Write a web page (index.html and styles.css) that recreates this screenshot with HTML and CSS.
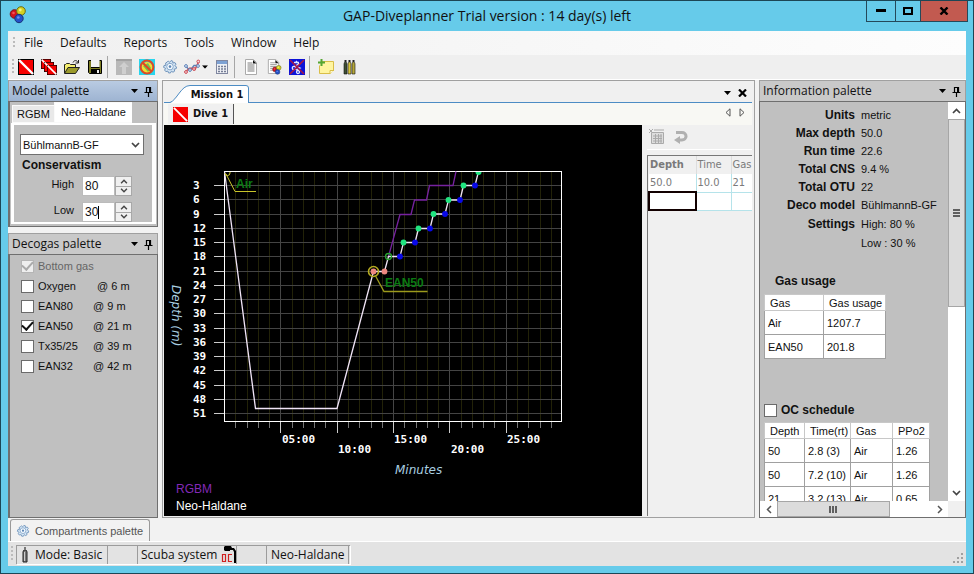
FILE: index.html
```html
<!DOCTYPE html>
<html lang="en">
<head>
<meta charset="utf-8">
<title>GAP-Diveplanner</title>
<link rel="stylesheet" href="styles.css">
</head>
<body>
<svg class="defs" width="0" height="0" aria-hidden="true">
  <defs>
    <symbol id="flag" viewBox="0 0 16 16"><rect width="16" height="16" fill="#000"/><rect x="1" y="1" width="14" height="14" fill="#f60000"/><path d="M1 1l14 14" stroke="#fff" stroke-width="2.4"/></symbol>
    <symbol id="pin" viewBox="0 0 9 11"><path d="M2.5 6V1.5H6.5V6M5.6 1v5M0.5 6.5h8M4.5 7v4" fill="none" stroke="#000" stroke-width="1.2"/></symbol>
    <symbol id="down" viewBox="0 0 7 4"><path d="M0 0h7L3.5 4z" fill="#000"/></symbol>
    <symbol id="chev-up" viewBox="0 0 9 6"><path d="M1 5l3.5-3.5L8 5" fill="none" stroke="#444" stroke-width="1.7"/></symbol>
    <symbol id="chev-down" viewBox="0 0 9 6"><path d="M1 1l3.5 3.5L8 1" fill="none" stroke="#444" stroke-width="1.7"/></symbol>
    <symbol id="gear" viewBox="0 0 16 16"><path d="M6.2 2l1.4 1.3L9 1.6l1.7.5.2 1.9 2.1-.4 1 1.6-1.2 1.5 1.7 1.2-.3 1.8-2 .4.4 2.1-1.6 1-1.6-1-1 1.8-1.9-.1-.6-1.8-2.1.5L2.6 11l1-1.6-2-1L2 6.5l2-.3L3.6 4l1.6-.9z" fill="#d5e6f5" stroke="#6f93bb" stroke-width="1"/><circle cx="8" cy="7.6" r="3.3" fill="#f4faff" stroke="#86a7ca"/><circle cx="8" cy="7.6" r="1.3" fill="#5d86b5"/></symbol>
    <symbol id="balls" viewBox="0 0 18 18"><circle cx="5.5" cy="8" r="4.3" fill="#d3141c" stroke="#74151a"/><circle cx="12" cy="5" r="4.3" fill="#d4d021" stroke="#6d6d16"/><circle cx="10" cy="12.5" r="4.2" fill="#2552c8" stroke="#173276"/><circle cx="11.3" cy="4" r="1.4" fill="#f6f47d"/><circle cx="4.5" cy="7" r="1.3" fill="#f0555a"/><circle cx="9.3" cy="11.5" r="1.3" fill="#6d8df0"/></symbol>
    <symbol id="page" viewBox="0 0 16 16"><path d="M2.5.5h8l3 3v12h-11z" fill="#fff" stroke="#aaa"/><path d="M10 1l3.5 3.5H10z" fill="#111"/><path d="M4.5 4h5M4.5 6h7M4.5 8h7M4.5 10h7M4.5 12h7" stroke="#a8a8a8" stroke-width="1.3"/></symbol>
  </defs>
</svg>

<div class="window">
  <header class="titlebar">
    <svg class="app-icon" viewBox="0 0 18 18"><use href="#balls"/></svg>
    <h1>GAP-Diveplanner Trial version : 14 day(s) left</h1>
    <div class="caption">
      <button class="min" aria-label="Minimize"><svg width="10" height="4"><rect width="10" height="3"/></svg></button>
      <button class="max" aria-label="Maximize"><svg width="10" height="8"><rect x="1" y="1" width="8" height="6" fill="none" stroke="#000" stroke-width="2"/></svg></button>
      <button class="close" aria-label="Close"><svg width="10" height="8"><path d="M1.5.5l7 7M8.5.5l-7 7" stroke="#000" stroke-width="2.4"/></svg></button>
    </div>
  </header>

  <div class="client">
    <nav class="menubar">
      <i class="grip"></i>
      <button>File</button><button>Defaults</button><button>Reports</button><button>Tools</button><button>Window</button><button>Help</button>
    </nav>

    <div class="toolbar" role="toolbar" aria-label="Main">
      <i class="grip"></i>
      <button aria-label="New dive"><svg class="ic"><use href="#flag"/></svg></button>
      <button aria-label="New mission"><svg class="ic" viewBox="0 0 16 16"><use href="#flag" width="10" height="10"/><use href="#flag" x="3" y="3" width="10" height="10"/><use href="#flag" x="6" y="6" width="10" height="10"/></svg></button>
      <button aria-label="Open"><svg class="ic" viewBox="0 0 16 16"><path d="M.5 14V5.5h1l1-1h3l1 1h5V8" fill="#f5ef70" stroke="#222"/><path d="M.5 14.5L4 8.5h11.5l-4 6z" fill="#9b9a2b" stroke="#222"/><path d="M9 3.5c1-2.5 4-2.5 5 0M14.5 1v3h-3" fill="none" stroke="#222"/></svg></button>
      <button aria-label="Save"><svg class="ic" viewBox="0 0 16 16"><path d="M1.5 1.5h13v13H2.5l-1-1z" fill="#7d7d23" stroke="#000"/><path d="M4 1h8.5v7H4z" fill="#f2f2f2"/><path d="M4 8.5h8.5" stroke="#000"/><path d="M4 10h9v4.5H4z" fill="#000"/><path d="M10 11h2v3h-2z" fill="#eee"/></svg></button>
      <i class="sep"></i>
      <button aria-label="Ascent"><svg class="ic" viewBox="0 0 16 16"><rect width="16" height="16" fill="#b9b9b9"/><path d="M0 1h16" stroke="#a2a2a2" stroke-width="2"/><path d="M8 3l5 5h-3v7H6V8H3z" fill="#cfcfcf"/></svg></button>
      <button aria-label="No-fly"><svg class="ic" viewBox="0 0 16 16"><rect width="16" height="16" fill="#27d5ee"/><circle cx="8" cy="8.5" r="5.5" fill="#f6df31"/><path d="M4 7l5-3 3 5-3 4z" fill="#6dc455"/><circle cx="8" cy="8" r="6.4" fill="none" stroke="#dd4a26" stroke-width="2"/><path d="M3.5 3.5l9 9" stroke="#dd4a26" stroke-width="2.2"/></svg></button>
      <button aria-label="Settings"><svg class="ic"><use href="#gear"/></svg></button>
      <button class="split" aria-label="Graphs"><svg class="ic" viewBox="0 0 16 16"><path d="M1 6.5l5 5 4-5h5" fill="none" stroke="#5b7fb5" stroke-width="1.3"/><path d="M1 13l5-4 5 1.5L15 2" fill="none" stroke="#cc4954" stroke-width="1.5"/><g fill="#e9f1fb" stroke="#5b7fb5"><circle cx="2" cy="7" r="1.4"/><circle cx="6" cy="11" r="1.4"/><circle cx="14" cy="7" r="1.4"/></g><g fill="#f7dfe1" stroke="#cc4954"><circle cx="2" cy="13" r="1.4"/><circle cx="10" cy="10" r="1.4"/><circle cx="14.3" cy="2.5" r="1.4"/></g></svg><svg width="6" height="4" viewBox="0 0 7 4"><use href="#down"/></svg></button>
      <button aria-label="Calculator"><svg class="ic" viewBox="0 0 16 16"><rect x="2.5" y="1.5" width="11" height="13" fill="#eef0f5" stroke="#8087a0"/><path d="M3 2h10v3H3z" fill="#7da2d4"/><path d="M4 7.5h8M4 10h8M4 12.5h8" stroke="#767d95" stroke-width="1.5" stroke-dasharray="2 1"/></svg></button>
      <i class="sep"></i>
      <button aria-label="Report"><svg class="ic"><use href="#page"/></svg></button>
      <button aria-label="Gas report"><svg class="ic" viewBox="0 0 16 16"><use href="#page" width="15" height="15"/><use href="#balls" x="6" y="6" width="10" height="10"/></svg></button>
      <button aria-label="Exclude bubbles"><svg class="ic" viewBox="0 0 16 16"><rect width="16" height="16" fill="#0a12d8"/><g fill="none" stroke="#dfe8ff" stroke-width="1.3"><path d="M5 3.5h5M7 2l3 3-4 2 5 2-4 2"/><circle cx="5" cy="9" r="1.7"/><circle cx="9" cy="13" r="1.5"/></g><path d="M1 1l14 14M15 1L1 15" stroke="#a71845" stroke-width="1.6"/></svg></button>
      <i class="sep"></i>
      <button aria-label="Add note"><svg class="ic" viewBox="0 0 16 16"><path d="M3.5 2.5h12v9l-3 3h-11v-8" fill="#fff5a0" stroke="#d9be48"/><path d="M12 15v-3.5h4" fill="#fffad0" stroke="#d9be48"/><path d="M3.5 0v7M0 3.5h7" stroke="#55a632" stroke-width="2"/></svg></button>
      <button aria-label="Tanks"><svg class="ic" viewBox="0 0 16 16"><path d="M3 5q0-2 1.5-2T6 5v10H3z" fill="#3e4f35" stroke="#111" stroke-width=".6"/><path d="M7 5q0-2 1.5-2T10 5v10H7z" fill="#d8c53c" stroke="#111" stroke-width=".6"/><path d="M11 5q0-2 1.5-2T14 5v10h-3z" fill="#b5a73a" stroke="#111" stroke-width=".6"/><path d="M3.5 1h2v2h-2zM7.5 1h2v2h-2zM11.5 1h2v2h-2z" fill="#222"/></svg></button>
    </div>

    <div class="workspace">
      <aside class="left">
        <section class="panel model">
          <header class="active"><h2>Model palette</h2><button aria-label="Panel menu"><svg width="7" height="4"><use href="#down"/></svg></button><button aria-label="Pin"><svg width="9" height="11"><use href="#pin"/></svg></button></header>
          <div class="body">
            <div class="tabs"><button>RGBM</button><button class="on">Neo-Haldane</button></div>
            <form class="page">
              <div class="select"><select aria-label="Model"><option>BühlmannB-GF</option></select><svg width="9" height="6"><use href="#chev-down"/></svg></div>
              <h3>Conservatism</h3>
              <div class="num"><label for="high">High</label><input id="high" value="80"><span class="spin"><button type="button" aria-label="Increase high"><svg width="8" height="5"><use href="#chev-up"/></svg></button><button type="button" aria-label="Decrease high"><svg width="8" height="5"><use href="#chev-down"/></svg></button></span></div>
              <div class="num"><label for="low">Low</label><span class="edit"><input id="low" value="30"><i class="caret"></i></span><span class="spin"><button type="button" aria-label="Increase low"><svg width="8" height="5"><use href="#chev-up"/></svg></button><button type="button" aria-label="Decrease low"><svg width="8" height="5"><use href="#chev-down"/></svg></button></span></div>
            </form>
          </div>
        </section>
        <section class="panel deco">
          <header><h2>Decogas palette</h2><button aria-label="Panel menu"><svg width="7" height="4"><use href="#down"/></svg></button><button aria-label="Pin"><svg width="9" height="11"><use href="#pin"/></svg></button></header>
          <div class="body gases">
            <label class="off"><input type="checkbox" checked disabled><span>Bottom gas</span></label>
            <label><input type="checkbox"><span>Oxygen</span><b class="wide">@ 6 m</b></label>
            <label><input type="checkbox"><span>EAN80</span><b>@ 9 m</b></label>
            <label><input type="checkbox" checked><span>EAN50</span><b>@ 21 m</b></label>
            <label><input type="checkbox"><span>Tx35/25</span><b>@ 39 m</b></label>
            <label><input type="checkbox"><span>EAN32</span><b>@ 42 m</b></label>
          </div>
        </section>
      </aside>

      <main class="document">
        <div class="doc-tabs">
          <button class="doc-tab"><svg width="80" height="18" viewBox="0 0 80 18"><path d="M0 17.5H1C8 14 11 1.5 20 .5H76.5Q78.5.5 78.5 3V17.5V18H0z" fill="#fff"/><path d="M0 17.5C7 15 11 .5 20 .5H76Q78.5.5 78.5 3V18" fill="none" stroke="#4d8cc4"/></svg><span>Mission 1</span></button>
          <span class="doc-tools"><button aria-label="Documents"><svg width="7" height="4"><use href="#down"/></svg></button><button aria-label="Close document"><svg width="9" height="8"><path d="M1 .5l7 7M8 .5l-7 7" stroke="#000" stroke-width="2.2"/></svg></button></span>
        </div>
        <div class="dive-tabs">
          <button class="dive-tab"><svg width="15" height="15" viewBox="0 0 16 16"><rect width="16" height="16" fill="#f60000"/><path d="M1 1l14 14" stroke="#fff" stroke-width="2"/></svg><span>Dive 1</span></button>
          <span class="doc-tools"><button aria-label="Previous"><svg width="6" height="9"><path d="M5 .8v7.4L1 4.5z" fill="none" stroke="#555"/></svg></button><button aria-label="Next"><svg width="6" height="9"><path d="M1 .8v7.4l4-3.7z" fill="none" stroke="#555"/></svg></button></span>
        </div>
        <div class="dive">
          <div class="chart" id="chart"></div>
          <div class="segments">
            <div class="seg-tools">
              <button aria-label="Delete row"><svg width="16" height="16"><path d="M2.5 3.5h12v11h-12z" fill="#ddd" stroke="#aaa"/><path d="M4 7h9M4 9.5h9M4 12h9M6.5 5v9M9.5 5v9M12 5v9" stroke="#aaa"/><path d="M0 0l4 4M4 0L0 4M5 1h10" stroke="#aaa"/></svg></button>
              <button aria-label="Undo"><svg width="16" height="16"><path d="M3 3.5h6a4 3.7 0 0 1 0 7.5H6" fill="none" stroke="#b0b0b0" stroke-width="3"/><path d="M7 7v8L1 11z" fill="#b0b0b0"/></svg></button>
            </div>
            <div class="seg-grid">
              <table>
                <thead><tr><th class="first">Depth</th><th>Time</th><th>Gas</th></tr></thead>
                <tbody><tr><td>50.0</td><td>10.0</td><td>21</td></tr><tr><td class="cursor"></td><td></td><td></td></tr></tbody>
              </table>
            </div>
          </div>
        </div>
      </main>

      <aside class="panel info">
        <header><h2>Information palette</h2><button aria-label="Panel menu"><svg width="7" height="4"><use href="#down"/></svg></button><button aria-label="Pin"><svg width="9" height="11"><use href="#pin"/></svg></button></header>
        <div class="scroller">
          <div class="content">
            <dl>
              <dt>Units</dt><dd>metric</dd>
              <dt>Max depth</dt><dd>50.0</dd>
              <dt>Run time</dt><dd>22.6</dd>
              <dt>Total CNS</dt><dd>9.4 %</dd>
              <dt>Total OTU</dt><dd>22</dd>
              <dt>Deco model</dt><dd>BühlmannB-GF</dd>
              <dt>Settings</dt><dd>High: 80 %</dd>
              <dd>Low : 30 %</dd>
            </dl>
            <h3>Gas usage</h3>
            <table class="grid usage">
              <thead><tr><th>Gas</th><th>Gas usage</th></tr></thead>
              <tbody><tr><td>Air</td><td>1207.7</td></tr><tr><td>EAN50</td><td>201.8</td></tr></tbody>
            </table>
            <label class="oc"><input type="checkbox"><span>OC schedule</span></label>
            <table class="grid schedule">
              <colgroup><col class="c1"><col class="c2"><col class="c3"><col class="c4"></colgroup>
              <thead><tr><th>Depth</th><th>Time(rt)</th><th>Gas</th><th>PPo2</th></tr></thead>
              <tbody><tr><td>50</td><td>2.8 (3)</td><td>Air</td><td>1.26</td></tr><tr><td>50</td><td>7.2 (10)</td><td>Air</td><td>1.26</td></tr><tr><td>21</td><td>3.2 (13)</td><td>Air</td><td>0.65</td></tr></tbody>
            </table>
          </div>
          <div class="vbar"><button aria-label="Scroll up"><svg width="9" height="6"><use href="#chev-up"/></svg></button><div class="thumb"><svg width="7" height="8"><path d="M0 1h7M0 4h7M0 7h7" stroke="#606060" stroke-width="2"/></svg></div><button aria-label="Scroll down"><svg width="9" height="6"><use href="#chev-down"/></svg></button></div>
          <div class="hbar"><button aria-label="Scroll left"><svg width="6" height="9"><path d="M5 1L1.5 4.5 5 8" fill="none" stroke="#555" stroke-width="1.5"/></svg></button><div class="thumb"><svg width="8" height="7"><path d="M1 0v7M4 0v7M7 0v7" stroke="#606060" stroke-width="2"/></svg></div><button aria-label="Scroll right"><svg width="6" height="9"><path d="M1 1l3.5 3.5L1 8" fill="none" stroke="#555" stroke-width="1.5"/></svg></button></div>
        </div>
      </aside>
    </div>

    <div class="autohide"><button><svg width="14" height="14"><use href="#gear"/></svg><span>Compartments palette</span></button></div>

    <footer class="statusbar">
      <i class="grip"></i>
      <span class="cell mode"><svg width="8" height="16"><path d="M2 5q0-2 2-2t2 2v10H2z" fill="#777" stroke="#222"/><path d="M3 0h2v3H3z" fill="#777"/><path d="M3.5 5v9" stroke="#ccc"/></svg>Mode: Basic</span>
      <span class="cell blank"></span>
      <span class="cell scuba">Scuba system<svg width="15" height="17" viewBox="0 0 15 17"><path d="M3 1l1-1h6l1 2h2l2 3v12h-2V6l-1-2H9v1H4L3 4z" fill="#000"/><path d="M1.5 8.5h3v7h-3zM11 8.5H7.5v7H11" fill="none" stroke="#d02020" stroke-width="1.2"/></svg></span>
      <span class="cell blank"></span>
      <span class="cell algo">Neo-Haldane</span>
      <span class="cell end"></span>
      <svg class="resize" width="11" height="11"><path d="M8 1h2M8 5h2M4 5h2M8 9h2M4 9h2M0 9h2" stroke="#a0a0a0" stroke-width="2"/></svg>
    </footer>
  </div>
</div>
<script src="chart.js"></script>
</body>
</html>
```
FILE: styles.css
```css
* { box-sizing: border-box; }
body { margin: 0; font: 11px/14px "Liberation Sans", Arial, sans-serif; color: #111; }
h1, h2, h3, dl, dd { margin: 0; font-size: inherit; }
button { display: flex; align-items: center; justify-content: center; margin: 0; padding: 0; border: 0; background: none; color: inherit; font: inherit; }
svg { display: block; flex: none; }
.defs { position: absolute; }
table { border-collapse: collapse; table-layout: fixed; }
th, td { text-align: left; font-weight: normal; white-space: nowrap; overflow: hidden; }

.window { display: flex; flex-direction: column; height: 100vh; padding: 0 7px 7px; border: 1px solid #1c4655; background: #66cbea; }
.titlebar { display: grid; flex: none; grid-template-columns: 1fr auto 1fr; height: 30px; }
.app-icon { width: 18px; height: 18px; margin: 5px 0 0 1px; }
.titlebar h1 { font: 14px/29px "Open Sans", "Noto Sans", sans-serif; white-space: nowrap; }
.caption { display: flex; justify-self: end; height: 21px; margin-right: -2px; border: 1px solid #24495a; border-top: 0; }
.caption button { width: 28px; }
.caption .max { width: 26px; border: solid #24495a; border-width: 0 1px; }
.caption .close { width: 46px; background: #c25a50; }

.client { display: flex; flex: 1; flex-direction: column; min-height: 0; background: #f2f2f2; }
.grip { flex: none; width: 2px; height: 16px; background: repeating-linear-gradient(#bbb 0 2px, transparent 2px 4px); }
.menubar, .panel h2, .statusbar, .toolbar { font-family: "Open Sans", "Noto Sans", sans-serif; font-size: 12px; }
.menubar { display: flex; flex: none; align-items: center; height: 24px; padding-left: 5px; background: linear-gradient(90deg, #f0f0f0, #fdfdfd); }
.menubar button { padding: 0 9px 0 8px; }
.menubar button:first-of-type { padding: 0 9px; }
.menubar .grip { height: 12px; }
.toolbar { display: flex; flex: none; align-items: center; height: 25px; padding-left: 4px; background: #efefef; border-bottom: 1px solid #fff; }
.toolbar button { width: 23px; height: 22px; }
.toolbar .split { width: 29px; gap: 2px; }
.toolbar .sep { width: 1px; height: 22px; margin: 0 4px 0 1px; background: #a6a6a6; }
.ic { width: 16px; height: 16px; }

.workspace { display: grid; flex: 1; grid-template-columns: 150px minmax(0, 1fr) 207px; gap: 4px; min-height: 0; }
.left { display: flex; flex-direction: column; gap: 6px; min-height: 0; }
.panel { display: flex; flex-direction: column; min-height: 0; }
.panel > header { display: flex; flex: none; align-items: center; gap: 6px; height: 21px; padding: 0 4px 0 3px; border: 1px solid #a0a0a0; border-bottom: 0; background: #c9c9c9; }
.panel > header.active { background: linear-gradient(#b9cbe2, #9eb4d2); }
.panel h2 { flex: 1; font-weight: normal; line-height: 18px; }
.panel .body { border: 1px solid #6f6f6f; border-width: 1px 1px 1px 2px; background: #c0c0c0; }
.deco { flex: 1; }
.deco .body { flex: 1; }

.tabs { display: flex; align-items: flex-end; height: 21px; padding-left: 2px; }
.tabs button { height: 18px; padding: 0 4px; border: 1px solid #fafafa; border-right: 0; background: #e9e9e9; }
.tabs .on { height: 21px; padding: 0 6px 2px; background: #fff; }
.page { margin: 0 1px 2px; padding: 9px 8px 0 6px; border: solid #fff; border-width: 2px 4px 2px 3px; }
.select { position: relative; }
.select select { appearance: none; display: block; width: 100%; height: 21px; padding: 0 2px; border: 1px solid #707070; border-radius: 0; background: #fff; font: inherit; color: inherit; }
.select svg { position: absolute; right: 4px; top: 8px; }
.page h3, .info h3, .info dt, .oc { font-size: 12px; font-weight: bold; }
.page h3 { padding: 3px 2px 4px; }
.num { display: flex; height: 20px; margin-bottom: 6px; }
.page .num:last-child { margin-bottom: 0; }
.num label { width: 54px; margin-right: 8px; text-align: right; line-height: 17px; }
.num input { display: block; width: 33px; height: 20px; padding: 0 2px; border: 1px solid #bbb; background: #fff; font: 12px "Liberation Sans", sans-serif; color: #111; }
.edit { position: relative; }
.caret { position: absolute; left: 16px; top: 4px; width: 1px; height: 13px; background: #000; }
.spin { display: flex; flex-direction: column; width: 17px; border: 1px solid #a8a8a8; background: #a8a8a8; gap: 1px; }
.spin button { flex: 1; background: #f0f0f0; }

input[type="checkbox"] { appearance: none; display: grid; place-items: center; flex: none; width: 13px; height: 13px; margin: 0; border: 1px solid #6b6b6b; background: #fff; }
input[type="checkbox"]:checked::before { content: ""; width: 9px; height: 5px; margin-top: -3px; border: solid #111; border-width: 0 0 2px 2px; transform: rotate(-48deg); }
input[type="checkbox"]:disabled { border-color: #b5b5b5; background: #eee; }
input[type="checkbox"]:disabled::before { border-color: #aaa; }
.panel .gases { padding: 1px 0 0 11px; }
.gases label { display: flex; align-items: center; height: 20px; }
.gases span { width: 55px; margin-left: 4px; white-space: nowrap; }
.gases b { font-weight: normal; }
.gases .wide { margin-left: 4px; }
.gases .off { color: #666; }

.document { display: flex; flex-direction: column; min-width: 0; padding: 0 2px 1px 1px; border: 1px solid #a0a0a0; background: #f0f0f0; }
.doc-tabs, .dive-tabs { display: flex; flex: none; justify-content: space-between; }
.doc-tabs { height: 22px; align-items: flex-end; border-bottom: 1px solid #4d8cc4; }
.dive-tabs { height: 22px; background: #f8f8f4; }
.doc-tab, .dive-tab { font: bold 11px/14px "DejaVu Sans Condensed", "DejaVu Sans", sans-serif; }
.doc-tab { display: grid; margin: 0 0 -1px 6px; }
.doc-tab > * { grid-area: 1 / 1; }
.doc-tab span { padding: 2px 0 0 14px; }
.dive-tab { gap: 5px; height: 20px; margin: 1px 0 0 4px; padding: 0 5px; border-right: 1px solid #555; background: #f0f0f0; }
.doc-tools { display: flex; align-items: center; gap: 7px; height: 18px; padding-right: 5px; }
.dive-tabs .doc-tools { gap: 8px; padding-right: 7px; }
.dive { display: flex; flex: 1; min-height: 0; }
.chart { flex: 1; min-width: 0; background: #000; overflow: hidden; }
.chart svg { width: 100%; height: 100%; }
.chart text { fill: #fff; font: 12px "Liberation Sans", sans-serif; }
.chart .tick { font: bold 11px "DejaVu Sans Mono", monospace; }
.chart .axis { fill: #a9cfe0; font: italic 12px "DejaVu Sans", sans-serif; }
.chart .gas { fill: #0b7a12; font-weight: bold; }
.chart .rgbm { fill: #8429b8; }
.segments { display: flex; flex: none; flex-direction: column; width: 110px; padding-left: 5px; }
.seg-tools { display: flex; align-items: center; gap: 8px; height: 25px; padding-left: 2px; border-bottom: 1px solid #fff; }
.seg-grid { flex: 1; margin-top: 5px; border: solid #777; border-width: 1px 0 0 1px; }
.seg-grid table { width: 103px; font: 11px/14px "DejaVu Sans Condensed", sans-serif; color: #7a7a7a; }
.seg-grid th, .seg-grid td { height: 18px; padding: 0 1px; }
.seg-grid th { width: 35px; border-right: 1px solid #ddd; }
.seg-grid .first { width: 47px; font-weight: bold; }
.seg-grid th:last-child { width: 21px; border: 0; }
.seg-grid td { border: solid #b5e3ea; border-width: 0 1px 1px 0; background: #fff; }
.seg-grid td:last-child { border-right: 0; }
.seg-grid .cursor { border: 2px solid #120000; }

.scroller { display: grid; flex: 1; grid-template: minmax(0, 1fr) 16px / minmax(0, 1fr) 17px; min-height: 0; border: 1px solid #6f6f6f; background: #f0f0f0; }
.content { min-width: 0; padding: 4px 4px 0; overflow: hidden; background: #c0c0c0; }
.info dl { display: grid; grid-template-columns: 91px 1fr; grid-template-rows: repeat(5, 18px) repeat(3, 19px); column-gap: 6px; line-height: 18px; white-space: nowrap; }
.info dt { text-align: right; }
.info dd { grid-column: 2; }
.info h3 { margin: 21px 0 6px 11px; }
.grid { background: #fff; }
.grid th { height: 16px; padding: 0 0 0 5px; border: 1px solid #c8c8c8; }
.grid td { height: 24px; padding: 0 0 0 3px; border: 1px solid #a0a0a0; }
.usage { width: 122px; }
.usage th:first-child { width: 59px; }
.oc { display: flex; align-items: center; gap: 4px; height: 18px; margin: 42px 0 3px; }
.schedule { width: 165px; }
.c1 { width: 40px; } .c2 { width: 46px; } .c3 { width: 42px; } .c4 { width: 37px; }
.vbar, .hbar { display: flex; background: #fff; }
.vbar { flex-direction: column; }
.vbar button { width: 17px; height: 17px; }
.hbar button { width: 17px; height: 16px; }
.thumb { display: flex; align-items: center; justify-content: center; border: 1px solid #a6a6a6; background: #dcdcdc; }
.vbar .thumb { flex: 0 0 47%; margin-bottom: auto; }
.hbar .thumb { flex: 0 0 60%; margin-right: auto; }

.autohide { display: flex; flex: none; align-items: flex-end; height: 25px; padding: 0 2px; border-bottom: 1px solid #fff; }
.autohide button { gap: 5px; height: 22px; padding: 0 6px 0 5px; border: 1px solid #999; border-bottom: 0; border-radius: 3px 3px 0 0; color: #555; }
.statusbar { display: flex; flex: none; align-items: center; height: 24px; padding: 0 0 0 3px; background: #e3e3e3; }
.cell { display: flex; align-items: center; height: 19px; border: solid #9c9c9c; border-width: 1px 0 0 1px; box-shadow: 1px 1px #fff; white-space: nowrap; }
.mode { gap: 6px; width: 91px; margin-left: 3px; padding-left: 4px; }
.blank { width: 30px; }
.scuba { width: 99px; gap: 4px; padding-left: 3px; }
.algo { width: 82px; padding-left: 4px; }
.cell.end { width: 2px; }
.resize { align-self: flex-end; margin: 0 2px 2px auto; }
```
FILE: chart.js
```js
// Depth/time profile: one minute is 11.27 units wide, three metres are 14.25 units high.
const left = 60.5, top0 = 46.5, right = 397.5, bottom = 296.5;
const out = [];
const line = (x1, y1, x2, y2, color) =>
  out.push(`<path d="M${x1} ${y1}L${x2} ${y2}" stroke="${color}"/>`);
const snap = v => Math.floor(v) + 0.5;

for (let m = 1; m < 30; m++) {
  const x = snap(left + m * 11.27), major = m % 5 === 0;
  line(x, top0, x, bottom, major ? '#454545' : '#222208');
  line(x, bottom, x, major ? 308 : 303, major ? '#ccc' : '#777');
}
for (let i = 0; i < 17; i++) {
  const y = snap(60.5 + i * 14.25);
  line(left, y, right, y, '#444');
  line(50, y, left, y, '#ccc');
  out.push(`<text class="tick" x="29" y="${y + 3.5}">${(i + 1) * 3}</text>`);
}
['05:00', '10:00', '15:00', '20:00', '25:00'].forEach((t, i) => {
  out.push(`<text class="tick" x="${[118, 174, 230, 287, 343][i]}" y="${i % 2 ? 328 : 318}">${t}</text>`);
});
out.push(`<rect x="${left}" y="${top0}" width="${right - left}" height="${bottom - top0}" fill="none" stroke="#fff"/>`);

const poly = (pts, color, w) =>
  out.push(`<polyline points="${pts}" fill="none" stroke="${color}" stroke-width="${w}"/>`);
poly('224.5,131.5 236,89.5 247,89.5 250.5,75 262.5,75 265.5,60.5 289,60.5 292,46.5', '#7722a0', 1.3);
poly('60.5,46.5 91.5,283.5 173,283.5 209.5,146.5 220.5,146.5 224.5,131.5 236,131.5 239.5,117.5 251,117.5 254.5,103.5 266,103.5 269.5,89 281,89 284.5,75 296,75 299.5,60.5 311,60.5 314.5,46.5', '#f0e4f6', 1.3);

const dot = (x, y, c) => out.push(`<circle cx="${x}" cy="${y}" r="2.9" fill="${c}"/>`);
[[236, 131.5], [251, 117.5], [266, 103.5], [281, 89], [296, 75], [311, 60.5]].forEach(p => dot(...p, '#0808e8'));
[[239.5, 117.5], [254.5, 103.5], [269.5, 89], [284.5, 75], [299.5, 60.5]].forEach(p => dot(...p, '#20e580'));
out.push('<path d="M311.5 47a3 3 0 0 0 6 0z" fill="#20e580"/>');
dot(209.5, 146.5, '#ee8880');
dot(220.5, 146.5, '#ee8880');
out.push('<circle cx="224.5" cy="131.5" r="3" fill="none" stroke="#28a030" stroke-width="1.3"/>');
out.push('<circle cx="209.5" cy="146.5" r="5" fill="none" stroke="#b5aa20" stroke-width="1.6"/>');
out.push('<path d="M61 48a2.5 2.5 0 0 0 5 0v-1M62 49L71 66.5H92" fill="none" stroke="#c9c52a"/>');
out.push('<path d="M211 150L220 166.5H263.5" fill="none" stroke="#9c9a1c" stroke-width="1.3"/>');
out.push('<text class="gas" x="72" y="63">Air</text><text class="gas" x="221" y="162">EAN50</text>');
out.push('<text class="axis" x="231" y="349">Minutes</text>');
out.push('<text class="axis" transform="translate(8 160) rotate(90)">Depth (m)</text>');
out.push('<text class="rgbm" x="12" y="368">RGBM</text><text x="12" y="385">Neo-Haldane</text>');

document.getElementById('chart').innerHTML =
  `<svg viewBox="0 0 478 391" preserveAspectRatio="xMinYMin meet" role="img" aria-label="Dive profile">${out.join('')}</svg>`;
```
